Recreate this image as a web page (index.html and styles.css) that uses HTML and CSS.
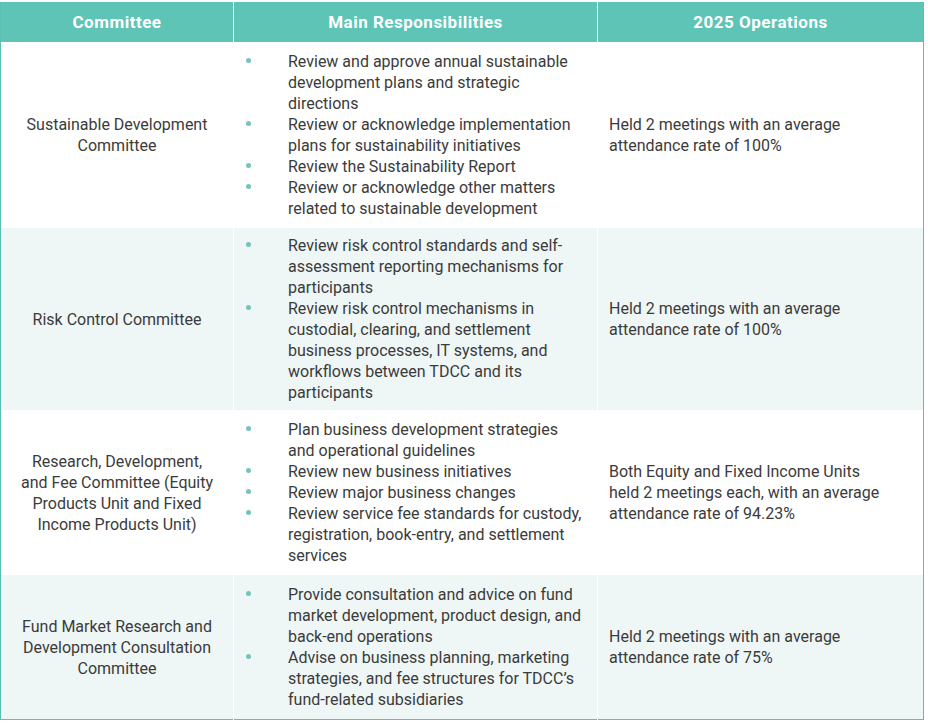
FILE: index.html
```html
<!DOCTYPE html>
<html>
<head>
<meta charset="utf-8">
<link rel="stylesheet" href="styles.css">
</head>
<body>
<table class="grid">
  <colgroup>
    <col class="c1"><col class="c2"><col class="c3">
  </colgroup>
  <thead>
    <tr>
      <th>Committee</th>
      <th>Main Responsibilities</th>
      <th>2025 Operations</th>
    </tr>
  </thead>
  <tbody>
    <tr>
      <td class="name">Sustainable Development<br>Committee</td>
      <td class="resp">
        <ul>
          <li>Review and approve annual sustainable<br>development plans and strategic<br>directions</li>
          <li>Review or acknowledge implementation<br>plans for sustainability initiatives</li>
          <li>Review the Sustainability Report</li>
          <li>Review or acknowledge other matters<br>related to sustainable development</li>
        </ul>
      </td>
      <td class="ops">Held 2 meetings with an average<br>attendance rate of 100%</td>
    </tr>
    <tr class="alt tight">
      <td class="name">Risk Control Committee</td>
      <td class="resp">
        <ul>
          <li>Review risk control standards and self-<br>assessment reporting mechanisms for<br>participants</li>
          <li>Review risk control mechanisms in<br>custodial, clearing, and settlement<br>business processes, IT systems, and<br>workflows between TDCC and its<br>participants</li>
        </ul>
      </td>
      <td class="ops">Held 2 meetings with an average<br>attendance rate of 100%</td>
    </tr>
    <tr>
      <td class="name">Research, Development,<br>and Fee Committee (Equity<br>Products Unit and Fixed<br>Income Products Unit)</td>
      <td class="resp">
        <ul>
          <li>Plan business development strategies<br>and operational guidelines</li>
          <li>Review new business initiatives</li>
          <li>Review major business changes</li>
          <li>Review service fee standards for custody,<br>registration, book-entry, and settlement<br>services</li>
        </ul>
      </td>
      <td class="ops">Both Equity and Fixed Income Units<br>held 2 meetings each, with an average<br>attendance rate of 94.23%</td>
    </tr>
    <tr class="alt">
      <td class="name">Fund Market Research and<br>Development Consultation<br>Committee</td>
      <td class="resp">
        <ul>
          <li>Provide consultation and advice on fund<br>market development, product design, and<br>back-end operations</li>
          <li>Advise on business planning, marketing<br>strategies, and fee structures for TDCC’s<br>fund-related subsidiaries</li>
        </ul>
      </td>
      <td class="ops">Held 2 meetings with an average<br>attendance rate of 75%</td>
    </tr>
  </tbody>
</table>
</body>
</html>
```

FILE: styles.css
```css
html, body {
  margin: 0;
  padding: 0;
  background: #ffffff;
}
body {
  padding-top: 2px;
  font-family: Roboto, "Liberation Sans", sans-serif;
  color: #3b3b3b;
}
.grid {
  width: 923px;
  border-collapse: collapse;
  table-layout: fixed;
  border: 1px solid #5bbfb2;
  border-top: none;
}
.c1 { width: 233px; }
.c2 { width: 364px; }
.c3 { width: 326px; }
.grid th {
  background: #5ec4b6;
  color: #ffffff;
  font-weight: 700;
  font-size: 17px;
  height: 40px;
  padding: 0;
  text-align: center;
  vertical-align: middle;
  border-left: 1px solid #ffffff;
  letter-spacing: 0.5px;
}
.grid th:first-child { border-left: none; }
.grid td {
  font-size: 16px;
  line-height: 21px;
  padding: 9px 10px;
  vertical-align: middle;
  border-left: 1px solid #ffffff;
  white-space: nowrap;
}
.grid tr.tight td { padding-top: 7px; padding-bottom: 7px; }
.grid td:first-child { border-left: none; }
.grid tr.alt td { background: #eef6f6; }
.name { text-align: center; }
.ops { padding-left: 11px !important; }
.resp { padding-left: 10px !important; padding-right: 4px !important; }
.resp ul {
  list-style: none;
  margin: 0;
  padding: 0;
}
.resp li {
  position: relative;
  padding-left: 44px;
}
.resp li::before {
  content: "";
  position: absolute;
  left: 2px;
  top: 7px;
  width: 5px;
  height: 5px;
  border-radius: 50%;
  background: #74c4bb;
}
```
